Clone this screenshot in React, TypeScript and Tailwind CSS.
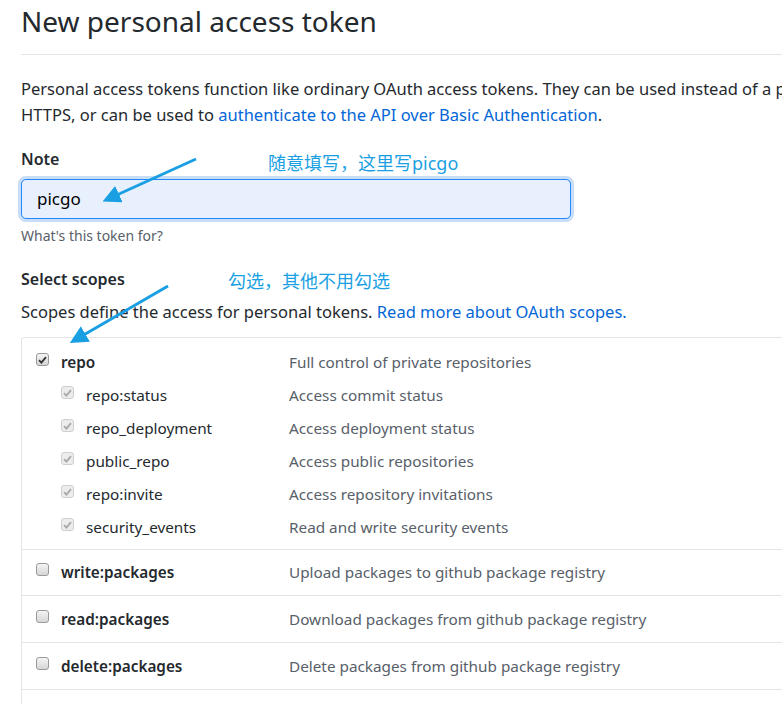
import React from 'react'

type Scope = { name: string; desc: string; checked?: boolean; disabled?: boolean }

const repoScopes: Scope[] = [
  { name: 'repo:status', desc: 'Access commit status' },
  { name: 'repo_deployment', desc: 'Access deployment status' },
  { name: 'public_repo', desc: 'Access public repositories' },
  { name: 'repo:invite', desc: 'Access repository invitations' },
  { name: 'security_events', desc: 'Read and write security events' },
]

const packageScopes: Scope[] = [
  { name: 'write:packages', desc: 'Upload packages to github package registry' },
  { name: 'read:packages', desc: 'Download packages from github package registry' },
  { name: 'delete:packages', desc: 'Delete packages from github package registry' },
]

const Checkbox: React.FC<{ checked?: boolean; disabled?: boolean }> = ({ checked, disabled }) => (
  <span
    className={
      'inline-flex w-[13px] h-[13px] mb-[6px] shrink-0 items-center justify-center rounded-[3px] border ' +
      (disabled
        ? 'border-[#cfcfcf] bg-[#ececec]'
        : 'border-[#9a9a9a] bg-gradient-to-b from-[#f4f4f4] to-[#d6d6d6]')
    }
  >
    {checked && (
      <svg width="9" height="8" viewBox="0 0 9 8">
        <path
          d="M1 4.2 L3.4 6.6 L8 1.2"
          fill="none"
          stroke={disabled ? '#a8a8a8' : '#333'}
          strokeWidth="1.8"
        />
      </svg>
    )}
  </span>
)

const ScopeRow: React.FC<{ scope: Scope; sub?: boolean; bold?: boolean; checked?: boolean }> = ({
  scope,
  sub,
  bold,
  checked,
}) => (
  <div className="flex items-center h-[33px]">
    <div className={'flex items-center w-[267px] ' + (sub ? 'pl-[39px]' : 'pl-[14px]')}>
      <Checkbox checked={checked} disabled={sub} />
      <span className={'ml-[12px] text-[#24292e] ' + (bold ? 'font-semibold' : '')}>{scope.name}</span>
    </div>
    <span className="text-[#586069] whitespace-nowrap">{scope.desc}</span>
  </div>
)

const Arrows: React.FC = () => (
  <svg className="absolute inset-0 pointer-events-none" width="782" height="704">
    <defs>
      <marker id="head" markerWidth="6" markerHeight="6" refX="4" refY="3" orient="auto">
        <path d="M0 0 L6 3 L0 6 Z" fill="#1a9fe3" />
      </marker>
    </defs>
    <line x1="196" y1="159" x2="108" y2="199" stroke="#1a9fe3" strokeWidth="3" markerEnd="url(#head)" />
    <line x1="168" y1="286" x2="75" y2="340" stroke="#1a9fe3" strokeWidth="3" markerEnd="url(#head)" />
  </svg>
)

export default function App() {
  return (
    <div
      className="relative w-[782px] h-[704px] overflow-hidden bg-white text-[#24292e]"
      style={{ fontFamily: '"Noto Sans", "Noto Sans CJK SC", sans-serif' }}
    >
      <div className="w-[1000px] pl-[21px]">
        <div className="h-[55px] border-b border-[#e1e4e8] pt-[1px]">
          <h1 className="text-[28px] leading-[40px] font-normal">New personal access token</h1>
        </div>

        <p className="mt-[21px] text-[16.5px] leading-[26px]">
          <span className="block whitespace-nowrap">
            Personal access tokens function like ordinary OAuth access tokens. They can be used instead of a password for Git over
          </span>
          <span className="block whitespace-nowrap">
            HTTPS, or can be used to <a className="text-[#0366d6]">authenticate to the API over Basic Authentication</a>.
          </span>
        </p>

        <div className="mt-[18px]">
          <div className="text-[16px] leading-[26px] font-semibold">Note</div>
          <div className="mt-[7px] w-[550px] h-[40px] rounded-[5px] border border-[#2188ff] bg-[#e8f0fe] shadow-[0_0_0_3px_rgba(3,102,214,0.22)] flex items-center pl-[15px] text-[17px] text-black">
            picgo
          </div>
          <div className="mt-[7px] text-[14px] leading-[20px] text-[#586069]">What's this token for?</div>
        </div>

        <div className="mt-[20px]">
          <div className="text-[16px] leading-[26px] font-semibold">Select scopes</div>
          <p className="mt-[7px] text-[16.5px] leading-[26px]">
            Scopes define the access for personal tokens. <a className="text-[#0366d6]">Read more about OAuth scopes.</a>
          </p>
        </div>

        <div className="mt-[12px] border border-[#e1e4e8] rounded-[3px] text-[15.3px]">
          <div className="pt-[8px] pb-[5px] border-b border-[#e1e4e8]">
            <ScopeRow scope={{ name: 'repo', desc: 'Full control of private repositories' }} bold checked />
            {repoScopes.map((s) => (
              <ScopeRow key={s.name} scope={s} sub checked />
            ))}
          </div>
          {packageScopes.map((s, i) => (
            <div
              key={s.name}
              className={'flex items-center border-b border-[#e1e4e8] ' + (i === 0 ? 'h-[46px]' : 'h-[47px]')}
            >
              <ScopeRow scope={s} bold />
            </div>
          ))}
          <div className="h-[40px]" />
        </div>
      </div>

      <div className="absolute left-[268px] top-[150px] text-[18px] leading-[26px] text-[#1a9fe3]">
        随意填写，这里写picgo
      </div>
      <div className="absolute left-[228px] top-[268px] text-[18px] leading-[26px] text-[#1a9fe3]">
        勾选，其他不用勾选
      </div>
      <Arrows />
    </div>
  )
}
